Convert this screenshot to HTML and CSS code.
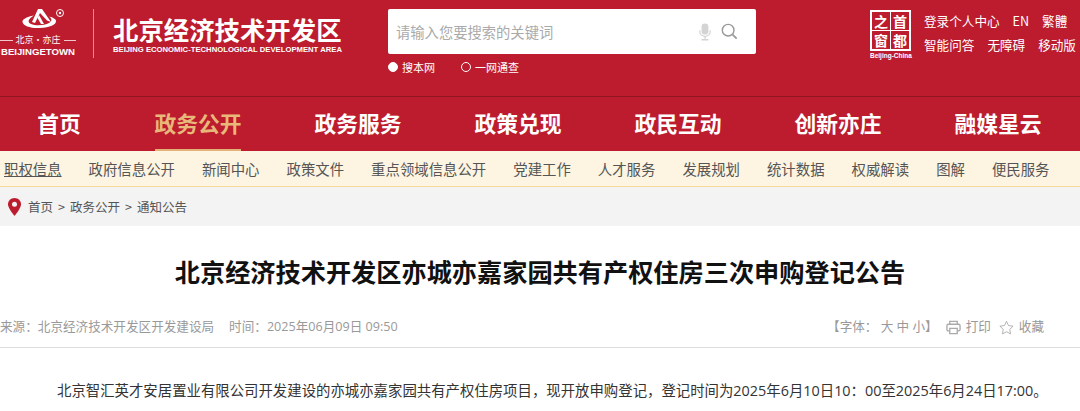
FILE: index.html
```html
<!DOCTYPE html>
<html lang="zh-CN">

<head>
  <meta charset="UTF-8">
  <meta name="viewport" content="width=device-width, initial-scale=1.0">
  <title>北京经济技术开发区亦城亦嘉家园共有产权住房三次申购登记公告</title>
  <link rel="stylesheet" href="styles.css">
</head>

<body>
  <header class="top">
    <div class="logo">
      <svg class="logo-mark" width="46" height="26" viewBox="20 8 46 26">
        <path d="M34 15.500C26 17 22 19.500 22.500 22 23 26 31 28.500 40 28 50 27.500 56 25 56 21 56 19 53 17.500 49 16.500 52 18.500 52.500 21 49 23 44 25.500 36 26 31 24 27 22.500 28 19 34 15.500z" fill="#fff" />
        <path d="M38 9h4l9 13-4-1.500L40 13l-5 10-3-1z" fill="#fff" />
        <path d="M39 15l5 9h-3l-3.500-6z" fill="#fff" />
        <circle cx="60" cy="13" r="3.500" fill="none" stroke="#fff" stroke-width="1" />
        <circle cx="60" cy="13" r="1.200" fill="#fff" />
      </svg>
      <div class="logo-cn"><span class="logo-line"></span>北京·亦庄<span class="logo-line"></span></div>
      <div class="logo-en">BEIJINGETOWN</div>
    </div>
    <div class="site-name">
      <div class="site-cn">北京经济技术开发区</div>
      <div class="site-en">BEIJING ECONOMIC-TECHNOLOGICAL DEVELOPMENT AREA</div>
    </div>
    <div class="search">
      <div class="search-box">
        <span class="search-hint">请输入您要搜索的关键词</span>
        <svg class="mic" width="12" height="18" viewBox="0 0 14 20">
          <rect x="3" y="0" width="8" height="13" rx="4" fill="#d4d4d4" />
          <path d="M1 8v2c0 3 3 5 6 5s6-2 6-5V8" fill="none" stroke="#d4d4d4" stroke-width="1.4" />
          <path d="M7 15v3M3 19h8" stroke="#d4d4d4" stroke-width="1.6" />
        </svg>
        <svg class="lens" width="17" height="17" viewBox="0 0 19 19">
          <circle cx="8" cy="8" r="6.5" fill="none" stroke="#999" stroke-width="1.6" />
          <path d="M13 13l4.5 4.5" stroke="#999" stroke-width="2" />
        </svg>
      </div>
      <div class="search-scope">
        <span class="scope"><i class="dot on"></i>搜本网</span>
        <span class="scope"><i class="dot"></i>一网通查</span>
      </div>
    </div>
    <div class="emblem">
      <div class="emblem-box">
        <span>之</span><span>首</span><span>窗</span><span>都</span>
      </div>
      <div class="emblem-en">Beijing-China</div>
    </div>
    <div class="top-links">
      <div class="top-row">
        <a>登录个人中心</a><a>EN</a><a>繁體</a>
      </div>
      <div class="top-row">
        <a>智能问答</a><a>无障碍</a><a>移动版</a>
      </div>
    </div>
  </header>

  <nav class="nav">
    <a class="home">首页</a>
    <a class="active">政务公开</a>
    <a>政务服务</a>
    <a>政策兑现</a>
    <a>政民互动</a>
    <a>创新亦庄</a>
    <a>融媒星云</a>
  </nav>

  <div class="subnav">
    <a class="current">职权信息</a>
    <a>政府信息公开</a>
    <a>新闻中心</a>
    <a>政策文件</a>
    <a>重点领域信息公开</a>
    <a>党建工作</a>
    <a>人才服务</a>
    <a>发展规划</a>
    <a>统计数据</a>
    <a>权威解读</a>
    <a>图解</a>
    <a>便民服务</a>
  </div>

  <div class="crumbs">
    <svg width="13" height="18" viewBox="0 0 13 18">
      <path d="M6.500 0C2.900 0 0 2.800 0 6.300 0 10.500 6.500 18 6.500 18S13 10.500 13 6.300C13 2.800 10.100 0 6.500 0z" fill="#bc1c2e" />
      <circle cx="6.500" cy="6.300" r="2.500" fill="#f3f3f3" />
    </svg>
    <div class="crumb-list">
      <a>首页</a><span>&gt;</span><a>政务公开</a><span>&gt;</span><a>通知公告</a>
    </div>
  </div>

  <main class="article">
    <h1>北京经济技术开发区亦城亦嘉家园共有产权住房三次申购登记公告</h1>
    <div class="meta">
      <div class="meta-left">
        <span>来源&#xFF1A;北京经济技术开发区开发建设局</span>
        <span>时间&#xFF1A;2025年06月09日 09:50</span>
      </div>
      <div class="meta-right">
        <span class="font-size">【字体&#xFF1A; 大 中 小】</span>
        <svg class="printer" width="15" height="15" viewBox="0 0 16 15">
          <path d="M4 4V1h8v3M4 11H2.500Q1 11 1 9.500V5.500Q1 4 2.500 4h11Q15 4 15 5.500v4Q15 11 13.500 11H12M4 8.500h8V14H4z" fill="none" stroke="#aaa" stroke-width="1.400" />
        </svg>
        <span>打印</span>
        <svg class="star" width="15" height="15" viewBox="0 0 17 16">
          <path d="M8.500 1l2.300 4.800 5.200.700-3.800 3.600.9 5.200-4.600-2.500-4.600 2.500.9-5.200L1 6.500l5.200-.7z" fill="none" stroke="#aaa" stroke-width="1" />
        </svg>
        <span>收藏</span>
      </div>
    </div>
    <p class="body-text">北京智汇英才安居置业有限公司开发建设的亦城亦嘉家园共有产权住房项目&#xFF0C;现开放申购登记&#xFF0C;登记时间为2025年6月10日10&#xFF1A;00至2025年6月24日17:00。</p>
  </main>
</body>

</html>
```

FILE: styles.css
```css
* {
  box-sizing: border-box;
}

html,
body {
  margin: 0;
  padding: 0;
  height: 411px;
  overflow: hidden;
  background-color: #fff;
  font-family: "Noto Sans CJK SC", "Noto Sans", sans-serif;
}

a {
  color: inherit;
  text-decoration: none;
}

.top {
  display: flex;
  height: 97px;
  background-color: #bc1c2e;
  border-bottom: 1px solid #8f1522;
  color: #fff;
}

.logo {
  display: flex;
  flex-direction: column;
  align-items: center;
  width: 94px;
  height: 49px;
  margin-top: 9px;
  padding-right: 17px;
  border-right: 1px solid #dd8d96;
}

.logo-mark {
  display: block;
  align-self: flex-start;
  flex: none;
  margin: -1px 0 0 20px;
}

.logo-cn {
  display: flex;
  align-items: center;
  gap: 3px;
  width: 76px;
  font-size: 9px;
  line-height: 12px;
  white-space: nowrap;
}

.logo-line {
  flex: 1;
  height: 1px;
  background-color: #f0c8cc;
}

.logo-en {
  font-family: "Liberation Sans", sans-serif;
  font-size: 9.600px;
  font-weight: bold;
  line-height: 12px;
  white-space: nowrap;
}

.site-name {
  width: 294px;
  padding: 15px 0 0 19px;
}

.site-cn {
  font-size: 25.400px;
  font-weight: bold;
  line-height: 28px;
  white-space: nowrap;
}

.site-en {
  font-family: "Liberation Sans", sans-serif;
  font-size: 7.700px;
  font-weight: bold;
  line-height: 10px;
  margin-top: 2px;
  white-space: nowrap;
}

.search {
  width: 368px;
  padding-top: 9px;
}

.search-box {
  display: flex;
  align-items: center;
  height: 45px;
  padding: 0 18px 0 8px;
  background-color: #fff;
  border-radius: 2px;
}

.search-hint {
  flex: 1;
  color: #aaa;
  font-size: 14.300px;
}

.mic {
  margin-right: 10px;
}

.search-scope {
  display: flex;
  gap: 26px;
  margin-top: 5px;
  font-size: 11px;
  line-height: 16px;
}

.scope {
  display: flex;
  align-items: center;
  gap: 4px;
}

.dot {
  display: block;
  width: 10px;
  height: 10px;
  border: 1px solid #fff;
  border-radius: 50%;
}

.dot.on {
  background-color: #fff;
}

.emblem {
  width: 42px;
  margin: 10px 0 0 114px;
}

.emblem-box {
  display: grid;
  grid-template-columns: 1fr 1fr;
  grid-template-rows: 1fr 1fr;
  width: 41px;
  height: 41px;
  gap: 1px;
  background-color: #fff;
  border: 2px solid #fff;
}

.emblem-box span {
  display: flex;
  align-items: center;
  justify-content: center;
  background-color: #bc1c2e;
  font-size: 14px;
  font-weight: bold;
  line-height: 18px;
}

.emblem-en {
  font-family: "Liberation Sans", sans-serif;
  font-size: 6.500px;
  font-weight: bold;
  line-height: 9px;
  white-space: nowrap;
}

.top-links {
  margin-left: 12px;
  padding-top: 9px;
  font-size: 12.600px;
  white-space: nowrap;
}

.top-row {
  display: flex;
  gap: 13px;
  line-height: 24px;
}

.nav {
  display: flex;
  height: 54px;
  background-color: #bc1c2e;
  color: #fff;
}

.nav a {
  position: relative;
  flex: none;
  display: flex;
  justify-content: center;
  width: 160px;
  font-size: 21.800px;
  font-weight: bold;
  line-height: 52px;
}

.nav .home {
  width: 118px;
}

.nav a.active {
  color: #e8b77a;
}

.nav a.active::after {
  content: "";
  position: absolute;
  left: 37px;
  bottom: 0;
  width: 86px;
  height: 2px;
  background-color: #e2b277;
}

.subnav {
  display: flex;
  gap: 27px;
  height: 36px;
  padding-left: 4px;
  background-color: #fdf4e1;
  border-bottom: 1px solid #f8d79a;
  color: #555;
  font-size: 14.400px;
  line-height: 35px;
  white-space: nowrap;
}

.subnav .current {
  text-decoration: underline;
}

.crumbs {
  display: flex;
  align-items: center;
  gap: 7px;
  height: 39px;
  padding-left: 8px;
  background-color: #f3f3f3;
  color: #555;
  font-size: 12.500px;
}

.crumb-list {
  display: flex;
  gap: 5px;
}

h1 {
  margin: 0;
  padding-top: 27px;
  color: #111;
  font-size: 25.200px;
  font-weight: bold;
  line-height: 36px;
  text-align: center;
  white-space: nowrap;
}

.meta {
  display: flex;
  justify-content: space-between;
  align-items: center;
  height: 59px;
  padding: 18px 36px 0 0;
  border-bottom: 1px solid #ddd;
  color: #999;
  font-family: "Open Sans", "Noto Sans CJK SC", sans-serif;
  font-size: 12.600px;
  line-height: 18px;
  white-space: nowrap;
}

.meta-left {
  display: flex;
  gap: 15px;
}

.meta-right {
  display: flex;
  align-items: center;
  gap: 5px;
}

.font-size {
  margin-right: 3px;
}

.star {
  margin-left: 3px;
}

.body-text {
  margin: 0;
  padding: 30px 0 0 57px;
  color: #333;
  font-family: "Open Sans", "Noto Sans CJK SC", sans-serif;
  font-size: 14.400px;
  line-height: 26px;
  white-space: nowrap;
}
```
